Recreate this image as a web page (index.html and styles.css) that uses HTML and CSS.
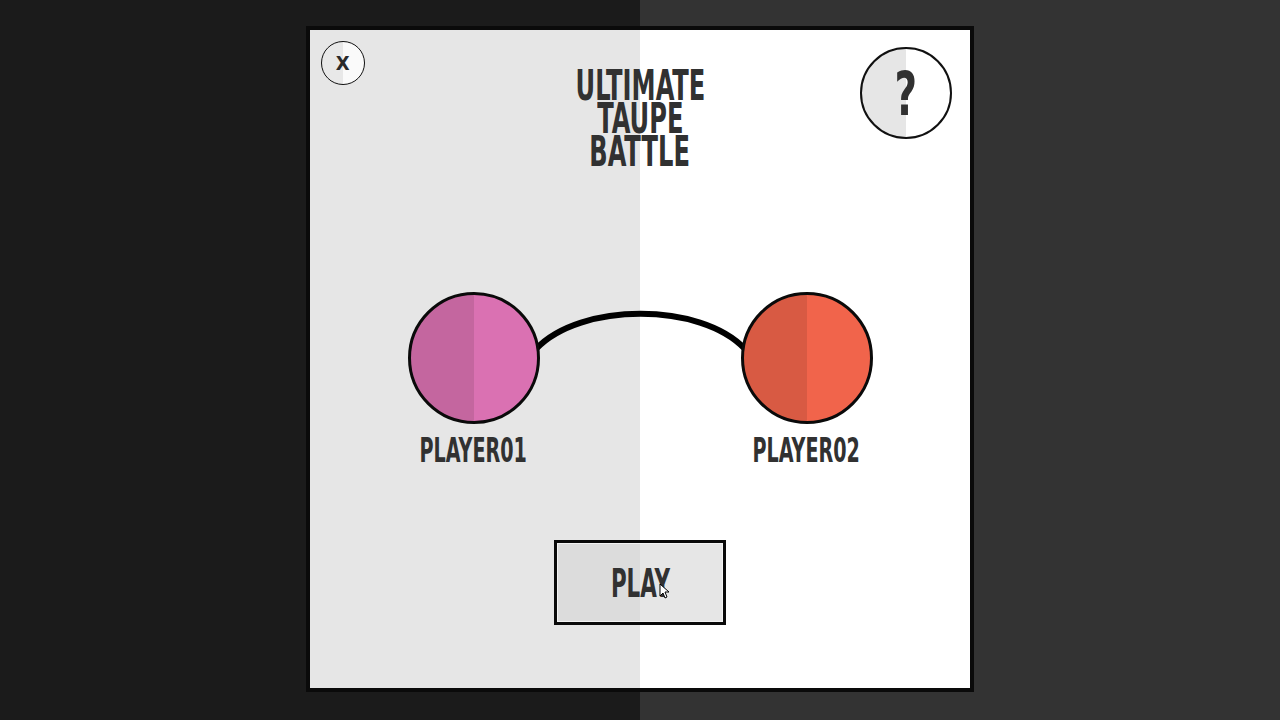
FILE: index.html
```html
<!DOCTYPE html>
<html>
<head>
<meta charset="utf-8">
<title>Ultimate Taupe Battle</title>
<link rel="stylesheet" href="styles.css">
</head>
<body>
<div class="panel">
  <div class="header">
    <div class="close-btn"><span class="close-x">X</span></div>
    <h1 class="title">
      <span class="title-line">ULTIMATE</span>
      <span class="title-line">TAUPE</span>
      <span class="title-line">BATTLE</span>
    </h1>
    <div class="help-btn"><span class="help-q">?</span></div>
  </div>
  <div class="players">
    <div class="player">
      <div class="disc disc-pink"></div>
      <div class="player-name">PLAYER01</div>
    </div>
    <svg class="link" width="201" height="132" viewBox="0 0 201 132">
      <path d="M -4 57 C 40 10, 161 10, 205 57" fill="none" stroke="#000" stroke-width="6"/>
    </svg>
    <div class="player">
      <div class="disc disc-orange"></div>
      <div class="player-name">PLAYER02</div>
    </div>
  </div>
  <div class="play-row">
    <div class="play-btn">
      <span class="play-label">PLAY</span>
      <svg class="cursor" width="11" height="16" viewBox="0 0 11 16">
        <path d="M1 1 L1 13 L4 10 L6 15 L8 14 L6 9 L10 9 Z" fill="#fff" stroke="#000" stroke-width="1" stroke-linejoin="round"/>
      </svg>
    </div>
  </div>
</div>
</body>
</html>
```
FILE: styles.css
```css
html, body {
  margin: 0;
  padding: 0;
}
body {
  width: 1280px;
  height: 720px;
  overflow: hidden;
  background: linear-gradient(to right, #1b1b1b 50%, #333333 50%);
  display: flex;
  justify-content: center;
  align-items: flex-start;
  padding-top: 26px;
  box-sizing: border-box;
  font-family: "DejaVu Sans Condensed", "Liberation Sans", sans-serif;
  color: #313131;
}
.panel {
  width: 660px;
  height: 658px;
  border: 4px solid #0a0a0a;
  background: linear-gradient(to right, #e6e6e6 50%, #ffffff 50%);
  display: flex;
  flex-direction: column;
  align-items: center;
}
.header {
  width: 100%;
  display: grid;
  grid-template-columns: 1fr auto 1fr;
  align-items: start;
}
.close-btn {
  justify-self: start;
  margin: 11px 0 0 11px;
  width: 42px;
  height: 42px;
  border: 1.5px solid #111;
  border-radius: 50%;
  background: linear-gradient(to right, #e8e8e8 50%, #fafafa 50%);
  display: flex;
  align-items: center;
  justify-content: center;
}
.close-x {
  font-family: "DejaVu Sans", sans-serif;
  font-weight: bold;
  font-size: 20px;
  line-height: 20px;
  color: #2a2a2a;
  transform: scaleX(0.9);
}
.title {
  margin: 39px 0 0 0;
  display: flex;
  flex-direction: column;
  align-items: center;
  font-weight: bold;
  font-size: 42px;
  line-height: 33px;
}
.title-line {
  display: block;
  white-space: nowrap;
  transform: scaleX(0.64);
}
.help-btn {
  justify-self: end;
  margin: 17px 18px 0 0;
  width: 88px;
  height: 88px;
  border: 2px solid #111;
  border-radius: 50%;
  background: linear-gradient(to right, #e6e6e6 50%, #ffffff 50%);
  display: flex;
  align-items: center;
  justify-content: center;
}
.help-q {
  font-weight: bold;
  font-size: 60px;
  line-height: 60px;
  transform: scaleX(0.72);
  margin-top: 2px;
}
.players {
  margin-top: 124px;
  display: flex;
  align-items: flex-start;
}
.player {
  width: 132px;
  display: flex;
  flex-direction: column;
  align-items: center;
  position: relative;
  z-index: 1;
}
.disc {
  width: 126px;
  height: 126px;
  border: 3px solid #0a0a0a;
  border-radius: 50%;
}
.disc-pink {
  background: linear-gradient(to right, #c4669f 50%, #da71b2 50%);
}
.disc-orange {
  background: linear-gradient(to right, #d85a43 50%, #f1644b 50%);
}
.player-name {
  margin-top: 10px;
  font-weight: bold;
  font-size: 33px;
  line-height: 33px;
  white-space: nowrap;
  transform: scaleX(0.645);
}
.link {
  overflow: visible;
  display: block;
}
.play-row {
  margin-top: 73px;
  display: flex;
  justify-content: center;
}
.play-btn {
  position: relative;
  width: 166px;
  height: 79px;
  border: 3px solid #0a0a0a;
  box-shadow: inset 0 0 0 1px #f3f3f3;
  background: linear-gradient(to right, #dcdcdc 50%, #e6e6e6 50%);
  display: flex;
  align-items: center;
  justify-content: center;
}
.play-label {
  font-weight: bold;
  font-size: 39px;
  line-height: 39px;
  transform: scaleX(0.61);
  margin-top: 2px;
}
.cursor {
  position: absolute;
  left: 102px;
  top: 40px;
}
```
